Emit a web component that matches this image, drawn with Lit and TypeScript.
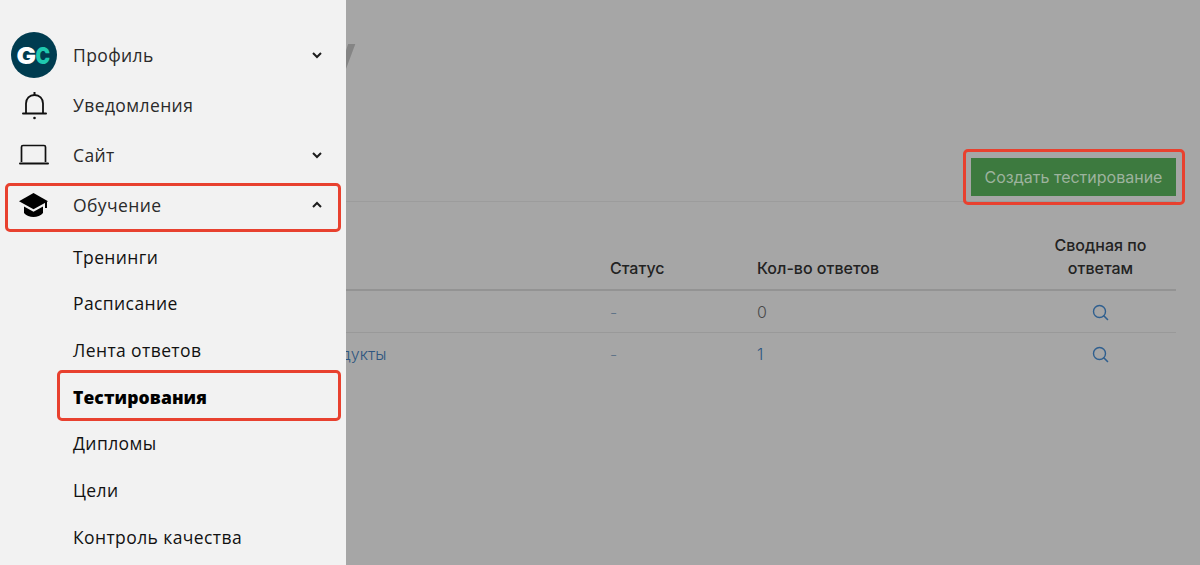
import { LitElement, html, css } from "lit";
import { customElement } from "lit/decorators.js";

const chevDown = html`<svg class="chev" width="12" height="8" viewBox="0 0 12 8"><path d="M2 2l4 4 4-4" fill="none" stroke="#1c1c1c" stroke-width="2"/></svg>`;
const chevUp = html`<svg class="chev" width="12" height="8" viewBox="0 0 12 8"><path d="M2 6l4-4 4 4" fill="none" stroke="#1c1c1c" stroke-width="2"/></svg>`;
const search = html`<svg width="17" height="17" viewBox="0 0 17 17"><circle cx="7.5" cy="7.5" r="6" fill="none" stroke="#2f5f8f" stroke-width="1.4"/><path d="M12 12l3.500 3.500" stroke="#2f5f8f" stroke-width="1.6" stroke-linecap="round"/></svg>`;

const icons = {
  logo: html`<svg width="46" height="46" viewBox="0 0 46 46"><circle cx="23" cy="23" r="23" fill="#003c50"/><text x="5.500" y="31.500" font-family="Inter, sans-serif" font-weight="900" font-size="23" textLength="20" lengthAdjust="spacingAndGlyphs" fill="#fff">G</text><text x="24.500" y="31.500" font-family="Inter, sans-serif" font-weight="900" font-size="23" textLength="15" lengthAdjust="spacingAndGlyphs" fill="#1fc8b0">C</text></svg>`,
  bell: html`<svg width="30" height="30" viewBox="0 0 30 30"><path d="M7 23V13.500C7 8.500 10.500 5 15.500 5S24 8.500 24 13.500V23" fill="none" stroke="#111" stroke-width="1.800"/><path d="M4 23.500h23" stroke="#111" stroke-width="2" stroke-linecap="round"/><path d="M15.500 2v3" stroke="#111" stroke-width="2"/><circle cx="15.500" cy="28" r="1.300" fill="#111"/></svg>`,
  laptop: html`<svg width="32" height="22" viewBox="0 0 32 22"><path d="M2.500 18V3q0-1.500 1.500-1.500h21q1.500 0 1.500 1.500v15" fill="none" stroke="#111" stroke-width="1.700"/><path d="M1 19.500h28" stroke="#111" stroke-width="2" stroke-linecap="round"/></svg>`,
  cap: html`<svg width="30" height="26" viewBox="0 0 30 26"><path d="M14.500 1L0 9.200l14.500 8 14.500-8z" fill="#000"/><path d="M5 14.500v6.500c2 2.500 6 4 9.500 4s7.500-1.500 9.500-4v-6.500l-9.500 5.200z" fill="#000"/><path d="M27 10v6" stroke="#000" stroke-width="2"/></svg>`,
};

@customElement("app-root")
export class AppRoot extends LitElement {
  static styles = css`
    :host { display: block; width: 1200px; height: 565px; overflow: hidden; position: relative; }
    .page { display: flex; height: 565px; background: #a6a6a6; }
    .side { width: 346px; flex: none; background: #f2f2f2; box-sizing: border-box; padding-top: 30px; font-family: "Open Sans", sans-serif; color: #222; position: relative; z-index: 1; overflow: hidden; }
    .top { height: 50px; display: flex; align-items: center; font-size: 17.5px; color: #2a2a2a; font-weight: 500; letter-spacing: 0.4px; }
    .ic { width: 73px; padding-left: 11px; box-sizing: border-box; flex: none; display: flex; }
    .ic.c { padding-left: 19px; }
    .lbl { flex: 1; }
    .chev { margin-right: 23px; }
    .subs { padding-top: 3.5px; }
    .sub { height: 46.67px; display: flex; align-items: center; padding-left: 73px; font-size: 17.5px; color: #111; font-weight: 500; letter-spacing: 0.4px; }
    .sub.on { font-weight: 800; color: #000; letter-spacing: 0.1px; }
    .main { flex: 1; min-width: 0; font-family: Inter, sans-serif; padding-right: 24px; }
    .head { height: 158px; box-sizing: border-box; padding-top: 29px; margin-left: -47px; font: 700 50px/50px "Liberation Sans", sans-serif; color: #858585; }
    .bar { height: 44px; box-sizing: border-box; display: flex; justify-content: flex-end; align-items: flex-start; border-bottom: 1px solid #9c9c9c; }
    .btn { width: 205px; height: 38px; box-sizing: border-box; background: #3d7a3f; color: #9db39e; font-size: 16px; display: flex; align-items: center; justify-content: center; }
    table { width: 830px; border-collapse: collapse; table-layout: fixed; margin-top: 29px; font-size: 16px; }
    th { font-weight: 500; color: #222; text-align: left; height: 59px; vertical-align: bottom; padding: 0 0 9px; line-height: 23px; border-bottom: 2px solid #939393; box-sizing: border-box; }
    td { height: 41px; padding: 0; color: #4a4a4a; border-bottom: 1px solid #999; font-size: 16px; font-weight: 300; }
    tr:last-child td { border-bottom: 0; }
    td.link { color: #2f5680; }
    .dash { color: #5f7488; }
    .ctr { text-align: center; }
    td.ctr svg { display: block; margin: 1px auto 0; }
    .shifted { text-indent: -36px; white-space: nowrap; }
    .w1 { width: 264px; } .w2 { width: 147px; } .w3 { width: 268px; } .w4 { width: 151px; }
    .mark { position: absolute; box-sizing: border-box; border: 3px solid #e8412f; border-radius: 5px; z-index: 2; }
    .m1 { left: 5px; top: 183px; width: 336px; height: 49px; }
    .m2 { left: 57px; top: 370px; width: 284px; height: 51px; }
    .m3 { left: 963px; top: 149px; width: 222px; height: 56px; }
  `;

  render() {
    const subs = ["Тренинги", "Расписание", "Лента ответов", "Тестирования", "Дипломы", "Цели", "Контроль качества"];
    return html`
      <div class="page">
        <nav class="side">
          <div class="top"><span class="ic">${icons.logo}</span><span class="lbl">Профиль</span>${chevDown}</div>
          <div class="top"><span class="ic c">${icons.bell}</span><span class="lbl">Уведомления</span></div>
          <div class="top"><span class="ic c">${icons.laptop}</span><span class="lbl">Сайт</span>${chevDown}</div>
          <div class="top"><span class="ic c">${icons.cap}</span><span class="lbl">Обучение</span>${chevUp}</div>
          <div class="subs">
            ${subs.map((s) => html`<div class="sub ${s === "Тестирования" ? "on" : ""}">${s}</div>`)}
          </div>
        </nav>
        <main class="main">
          <div class="head">Ту</div>
          <div class="bar"><div class="btn">Создать тестирование</div></div>
          <table>
            <colgroup><col class="w1" /><col class="w2" /><col class="w3" /><col class="w4" /></colgroup>
            <thead><tr><th></th><th>Статус</th><th>Кол-во ответов</th><th class="ctr">Сводная по<br />ответам</th></tr></thead>
            <tbody>
              <tr><td></td><td class="dash">-</td><td>0</td><td class="ctr">${search}</td></tr>
              <tr><td class="link shifted">Продукты</td><td class="dash">-</td><td class="link">1</td><td class="ctr">${search}</td></tr>
            </tbody>
          </table>
        </main>
      </div>
      <div class="mark m1"></div><div class="mark m2"></div><div class="mark m3"></div>
    `;
  }
}
